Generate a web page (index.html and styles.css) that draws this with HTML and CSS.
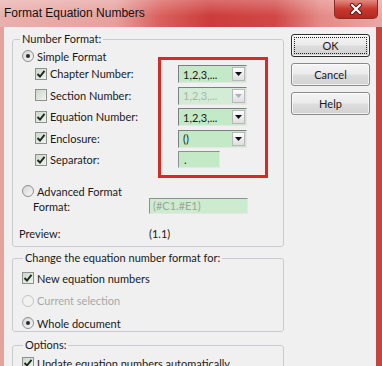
FILE: index.html
```html
<!DOCTYPE html>
<html lang="en">
  <head>
    <meta charset="UTF-8" />
    <meta name="viewport" content="width=device-width, initial-scale=1.0" />
    <title>Format Equation Numbers</title>
    <link rel="stylesheet" href="styles.css">
  </head>
  <body>
    <div class="window">
      <div class="titlebar">
        <span class="title">Format Equation Numbers</span>
        <span class="close">
          <svg width="14" height="12" viewBox="0 0 14 12">
            <path d="M3 2 L11 10 M11 2 L3 10" stroke="#5a1510" stroke-width="4" stroke-linecap="round" />
            <path d="M3 2 L11 10 M11 2 L3 10" stroke="#fff" stroke-width="2.2" stroke-linecap="round" />
          </svg>
        </span>
      </div>

      <div class="client">
        <div class="main">
          <fieldset class="group group-format">
            <legend>Number Format:</legend>

            <div class="simple">
              <div class="labels">
                <div class="opt radio-row"><span class="rb on"></span>Simple Format</div>
                <div class="opt sub"><span class="cb"><svg width="10" height="10" viewBox="0 0 10 10"><path d="M1.5 5 L4 7.5 L8.5 1.8" /></svg></span>Chapter Number:</div>
                <div class="opt sub"><span class="cb"></span>Section Number:</div>
                <div class="opt sub"><span class="cb"><svg width="10" height="10" viewBox="0 0 10 10"><path d="M1.5 5 L4 7.5 L8.5 1.8" /></svg></span>Equation Number:</div>
                <div class="opt sub"><span class="cb"><svg width="10" height="10" viewBox="0 0 10 10"><path d="M1.5 5 L4 7.5 L8.5 1.8" /></svg></span>Enclosure:</div>
                <div class="opt sub"><span class="cb"><svg width="10" height="10" viewBox="0 0 10 10"><path d="M1.5 5 L4 7.5 L8.5 1.8" /></svg></span>Separator:</div>
              </div>

              <div class="highlight">
                <div class="combo"><span class="val">1,2,3,...</span><span class="drop"><svg width="7" height="4" viewBox="0 0 7 4"><path d="M0 0 H7 L3.5 4 Z" /></svg></span></div>
                <div class="combo disabled"><span class="val">1,2,3,...</span><span class="drop"><svg width="7" height="4" viewBox="0 0 7 4"><path d="M0 0 H7 L3.5 4 Z" /></svg></span></div>
                <div class="combo"><span class="val">1,2,3,...</span><span class="drop"><svg width="7" height="4" viewBox="0 0 7 4"><path d="M0 0 H7 L3.5 4 Z" /></svg></span></div>
                <div class="combo"><span class="val">()</span><span class="drop"><svg width="7" height="4" viewBox="0 0 7 4"><path d="M0 0 H7 L3.5 4 Z" /></svg></span></div>
                <div class="field sep">.</div>
              </div>
            </div>

            <div class="opt radio-row advanced"><span class="rb"></span>Advanced Format</div>
            <div class="format-row">
              <span class="format-label">Format:</span>
              <div class="field wide disabled">(#C1.#E1)</div>
            </div>
            <div class="preview-row">
              <span class="preview-label">Preview:</span>
              <span>(1.1)</span>
            </div>
          </fieldset>

          <fieldset class="group group-apply">
            <legend>Change the equation number format for:</legend>
            <div class="opt"><span class="cb"><svg width="10" height="10" viewBox="0 0 10 10"><path d="M1.5 5 L4 7.5 L8.5 1.8" /></svg></span>New equation numbers</div>
            <div class="opt muted"><span class="rb dim"></span>Current selection</div>
            <div class="opt"><span class="rb on"></span>Whole document</div>
          </fieldset>

          <fieldset class="group group-options">
            <legend>Options:</legend>
            <div class="opt"><span class="cb"><svg width="10" height="10" viewBox="0 0 10 10"><path d="M1.5 5 L4 7.5 L8.5 1.8" /></svg></span>Update equation numbers automatically</div>
          </fieldset>
        </div>

        <div class="buttons">
          <button class="btn default"><span class="focus">OK</span></button>
          <button class="btn">Cancel</button>
          <button class="btn">Help</button>
        </div>
      </div>
    </div>
  </body>
</html>
```

FILE: styles.css
```css
html, body {
  margin: 0;
  height: 100%;
  overflow: hidden;
}
body {
  font-family: Lato, "Liberation Sans", Arial, sans-serif;
  font-size: 11px;
  color: #1a1a1a;
  background: #e5a19e;
}
.window {
  display: flex;
  flex-direction: column;
  height: 366px;
}
.titlebar {
  height: 27px;
  flex: none;
  display: flex;
  align-items: flex-start;
  background:
    linear-gradient(to bottom, rgba(255, 255, 255, 0.25), rgba(255, 255, 255, 0) 60%),
    linear-gradient(to right, #eab0ad 0%, #e6a19e 30%, #d9605c 42%, #cc3c3a 55%, #d04846 72%, #e48a86 84%, #e9a9a6 100%);
}
.title {
  margin: 7px 0 0 4px;
  font-family: "Liberation Sans", Arial, sans-serif;
  font-size: 12px;
  line-height: 13px;
  color: #111;
}
.close {
  margin: 0 4px 0 auto;
  width: 44px;
  height: 19px;
  box-sizing: border-box;
  border: 1px solid #8a2a25;
  border-top: none;
  border-radius: 0 0 5px 5px;
  background: linear-gradient(to bottom, #e38a7f, #c8382f 50%, #b02a22);
  display: flex;
  align-items: center;
  justify-content: center;
}
.client {
  flex: 1;
  display: flex;
  background: #f0f0f0;
  border-left: 4px solid #e3a29e;
  border-right: 6px solid #c7433f;
}
.main {
  width: 272px;
  padding: 5px 0 0 8px;
}
.group {
  margin: 0;
  padding: 0 0 0 6px;
  border: 1px solid #c8ccd0;
  border-radius: 3px;
}
.group legend {
  margin-left: 1px;
  padding: 0 2px;
  line-height: 14px;
}
.opt {
  display: flex;
  align-items: center;
  gap: 3px;
  height: 14px;
  white-space: nowrap;
}
.cb {
  width: 10px;
  height: 10px;
  flex: none;
  border: 1px solid #8e8f8f;
  background: linear-gradient(135deg, #cdd7cd, #eef3ee);
  display: flex;
  align-items: center;
  justify-content: center;
}
.cb svg path {
  fill: none;
  stroke: #1b2a1b;
  stroke-width: 1.9;
}
.rb {
  width: 10px;
  height: 10px;
  flex: none;
  border: 1px solid #8e8f8f;
  border-radius: 50%;
  background: linear-gradient(135deg, #d6d6d6, #f7f7f7);
  display: flex;
  align-items: center;
  justify-content: center;
}
.rb.on::after {
  content: "";
  width: 4px;
  height: 4px;
  border-radius: 50%;
  background: #2a2a2a;
}
.rb.dim {
  border-color: #c4c4c4;
  background: #f2f2f2;
}
.muted {
  color: #a8a8a8;
}

/* Number Format group */
.group-format {
  padding-bottom: 5px;
}
.simple {
  display: flex;
  padding-top: 3px;
}
.labels {
  width: 139px;
}
.radio-row {
  margin-left: 3px;
}
.labels .sub {
  height: 21.5px;
  margin-left: 16px;
}
.highlight {
  margin-top: 8px;
  width: 110px;
  box-sizing: border-box;
  border: 3px solid #d42a2a;
  padding: 5px 0 7px 17px;
  display: flex;
  flex-direction: column;
  gap: 3.5px;
}
.combo {
  width: 69px;
  height: 18px;
  box-sizing: border-box;
  display: flex;
  align-items: center;
  border-top: 1px solid #7b7f84;
  border-left: 1px solid #7b7f84;
  border-right: 1px solid #e6e6e6;
  border-bottom: 1px solid #e6e6e6;
  background: #c4e9c7;
}
.combo .val {
  flex: 1;
  padding-left: 4px;
}
.drop {
  width: 13px;
  height: 14px;
  margin-right: 1px;
  box-sizing: border-box;
  border: 1px solid #b9b9b9;
  background: linear-gradient(to bottom, #fdfdfd, #dedede);
  display: flex;
  align-items: center;
  justify-content: center;
}
.drop svg path {
  fill: #111;
}
.combo.disabled {
  background: #d3ecd5;
  color: #a9b8aa;
}
.combo.disabled .drop svg path {
  fill: #b0b0b0;
}
.field {
  height: 17px;
  box-sizing: border-box;
  padding-left: 5px;
  line-height: 15px;
  border-top: 1px solid #8d9196;
  border-left: 1px solid #8d9196;
  border-right: 1px solid #e6e6e6;
  border-bottom: 1px solid #e6e6e6;
  background: #c4e9c7;
}
.field.sep {
  width: 42px;
}
.field.wide {
  flex: none;
  width: 99px;
  height: 16px;
  line-height: 14px;
  padding-left: 3px;
}
.field.disabled {
  background: #cdebcf;
  color: #98a89a;
}
.advanced {
  margin-top: 6px;
}
.format-row {
  display: flex;
  align-items: center;
  height: 16px;
}
.format-label {
  flex: none;
  box-sizing: border-box;
  width: 130px;
  padding-left: 14px;
}
.preview-row {
  display: flex;
  height: 14px;
  margin-top: 13px;
}
.preview-label {
  width: 130px;
}

/* lower groups */
.group-apply {
  margin-top: 4px;
  padding: 6px 0 1px 9px;
  display: flex;
  flex-direction: column;
  gap: 8.5px;
}
.group-options {
  margin-top: 6px;
  padding: 4px 0 10px 9px;
}

/* buttons */
.buttons {
  margin: 7px 0 0 7px;
  display: flex;
  flex-direction: column;
  gap: 6px;
}
.btn {
  width: 79px;
  height: 23px;
  padding: 0;
  font-family: Lato, "Liberation Sans", Arial, sans-serif;
  font-size: 11px;
  color: #1a1a1a;
  border: 1px solid #8a8a8a;
  border-radius: 3px;
  background: linear-gradient(to bottom, #f4f4f4 0%, #ebebeb 48%, #dddddd 52%, #d2d2d2 100%);
  box-shadow: inset 0 0 0 1px rgba(255, 255, 255, 0.7);
}
.btn.default {
  border-color: #2c2c2c;
  display: flex;
  padding: 2px;
}
.focus {
  flex: 1;
  border: 1px dotted #222;
  display: flex;
  align-items: center;
  justify-content: center;
}
```
